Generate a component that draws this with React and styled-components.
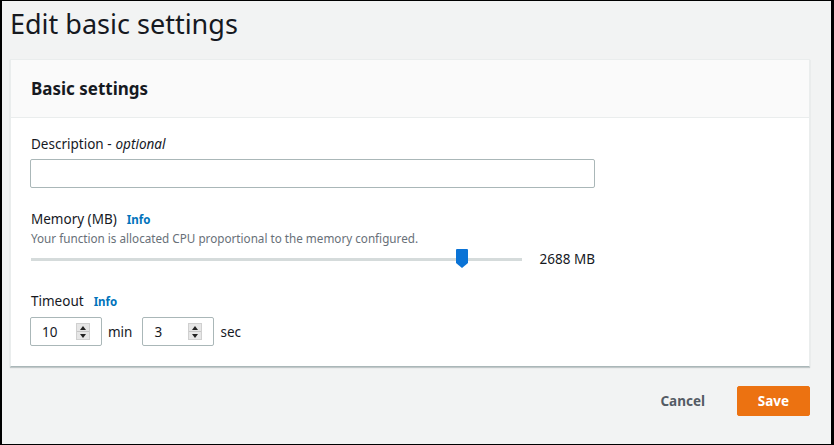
import React from 'react';
import styled, { createGlobalStyle } from 'styled-components';

const GlobalStyle = createGlobalStyle`
  html, body {
    margin: 0;
    padding: 0;
    background: #000;
  }
  * {
    box-sizing: border-box;
  }
`;

const Frame = styled.div`
  width: 834px;
  height: 445px;
  border-style: solid;
  border-color: #000;
  border-width: 1px 3px 1px 2px;
  background: #f2f3f3;
  font-family: "Noto Sans", "Open Sans", sans-serif;
  color: #16191f;
  padding: 0 21px 0 8px;
  display: flex;
  flex-direction: column;
`;

const PageTitle = styled.h1`
  margin: 0;
  font-size: 27px;
  font-weight: 400;
  line-height: 44px;
  height: 58px;
  padding-top: 1px;
  color: #16191f;
`;

const Card = styled.section`
  background: #fff;
  border: 1px solid #eaeded;
  border-bottom: 1px solid #aab7b8;
  width: 800px;
  box-shadow: 0 1px 1px rgba(0, 28, 36, 0.2);
`;

const CardHeader = styled.div`
  background: #fafafa;
  border-bottom: 1px solid #eaeded;
  height: 58px;
  padding: 0 20px;
  display: flex;
  align-items: center;
  h2 {
    margin: 0;
    font-size: 17px;
    font-weight: 700;
  }
`;

const CardBody = styled.div`
  padding: 16px 20px 20px 19px;
  display: flex;
  flex-direction: column;
`;

const Field = styled.div`
  display: flex;
  flex-direction: column;
  margin-bottom: ${(p) => p.$gap || 0}px;
`;

const Label = styled.label`
  font-size: 13.5px;
  line-height: 20px;
  color: #16191f;
  display: flex;
  align-items: baseline;
  padding-left: 1px;
  em {
    margin-left: 4px;
  }
`;

const InfoLink = styled.a`
  font-size: 11.5px;
  font-weight: 700;
  color: #0073bb;
  margin-left: 10px;
`;

const Hint = styled.div`
  font-size: 11.7px;
  line-height: 16px;
  color: #687078;
  padding-left: 1px;
`;

const TextInput = styled.input`
  width: 565px;
  height: 29px;
  margin-top: 5px;
  border: 1px solid #aab7b8;
  border-radius: 2px;
  background: #fff;
  font: inherit;
  padding: 0 8px;
`;

const SliderRow = styled.div`
  display: flex;
  align-items: center;
  width: 565px;
  height: 26px;
`;

const Track = styled.div`
  position: relative;
  width: 491px;
  height: 3px;
  margin-left: 1px;
  background: #d5dbdb;
`;

const Thumb = styled.svg`
  position: absolute;
  top: -9px;
  width: 12px;
  height: 19px;
`;

const SliderValue = styled.span`
  margin-left: auto;
  font-size: 13.5px;
`;

const SpinRow = styled.div`
  display: flex;
  align-items: center;
  margin-top: 5px;
`;

const SpinBox = styled.div`
  width: 72px;
  height: 29px;
  border: 1px solid #aab7b8;
  border-radius: 2px;
  background: #fff;
  display: flex;
  align-items: center;
  padding: 0 11px 0 11px;
  font-size: 13.5px;
  justify-content: space-between;
`;

const Spinner = styled.div`
  width: 14px;
  height: 17px;
  display: flex;
  flex-direction: column;
  background: #e6e6e6;
  border: 1px solid #d0d0d0;
  span {
    flex: 1;
    display: flex;
    align-items: center;
    justify-content: center;
  }
  span + span {
    border-top: 1px solid #c6c6c6;
  }
`;

const Unit = styled.span`
  font-size: 13.5px;
  margin: 0 10px 0 6px;
`;

const Actions = styled.div`
  display: flex;
  justify-content: flex-end;
  align-items: center;
  margin-top: 19px;
  width: 800px;
`;

const CancelButton = styled.button`
  background: none;
  border: none;
  font: inherit;
  font-size: 13.5px;
  font-weight: 700;
  color: #545b64;
  padding: 0 20px;
  margin-right: 12px;
  height: 30px;
`;

const SaveButton = styled.button`
  background: #ec7211;
  border: 1px solid #ec7211;
  border-radius: 2px;
  font: inherit;
  font-size: 13.5px;
  font-weight: 700;
  color: #fff;
  width: 73px;
  height: 30px;
`;

const Tri = ({ up }) => (
  <svg width="6" height="4" viewBox="0 0 6 4">
    <path d={up ? 'M0 4 L3 0 L6 4 Z' : 'M0 0 L3 4 L6 0 Z'} fill="#222" />
  </svg>
);

const NumberSpin = ({ value }) => (
  <SpinBox>
    <span>{value}</span>
    <Spinner>
      <span><Tri up /></span>
      <span><Tri /></span>
    </Spinner>
  </SpinBox>
);

export default function App() {
  const memory = 2688;
  const thumbLeft = 425;

  return (
    <>
      <GlobalStyle />
      <Frame>
        <PageTitle>Edit basic settings</PageTitle>
        <Card>
          <CardHeader>
            <h2>Basic settings</h2>
          </CardHeader>
          <CardBody>
            <Field $gap={21}>
              <Label>Description -<em>optional</em></Label>
              <TextInput type="text" />
            </Field>
            <Field $gap={19}>
              <Label>Memory (MB)<InfoLink>Info</InfoLink></Label>
              <Hint>Your function is allocated CPU proportional to the memory configured.</Hint>
              <SliderRow>
                <Track>
                  <Thumb viewBox="0 0 12 19" style={{ left: thumbLeft }}>
                    <path d="M0 1 Q0 0 1 0 L11 0 Q12 0 12 1 L12 14 L6 19 L0 14 Z" fill="#0a73d6" />
                  </Thumb>
                </Track>
                <SliderValue>{memory} MB</SliderValue>
              </SliderRow>
            </Field>
            <Field>
              <Label>Timeout<InfoLink>Info</InfoLink></Label>
              <SpinRow>
                <NumberSpin value="10" />
                <Unit>min</Unit>
                <NumberSpin value="3" />
                <Unit>sec</Unit>
              </SpinRow>
            </Field>
          </CardBody>
        </Card>
        <Actions>
          <CancelButton>Cancel</CancelButton>
          <SaveButton>Save</SaveButton>
        </Actions>
      </Frame>
    </>
  );
}
